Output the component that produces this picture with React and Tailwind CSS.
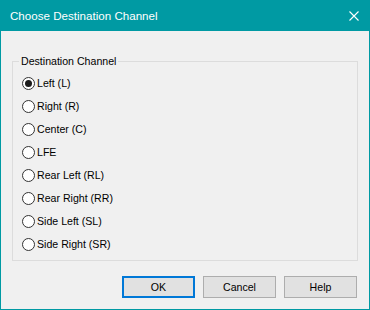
import React from "react";

const options = [
  "Left (L)",
  "Right (R)",
  "Center (C)",
  "LFE",
  "Rear Left (RL)",
  "Rear Right (RR)",
  "Side Left (SL)",
  "Side Right (SR)",
];

function Radio({ checked }) {
  return (
    <span className="w-[13px] h-[13px] rounded-full border border-[#333333] bg-white flex items-center justify-center shrink-0">
      {checked && <span className="w-[7px] h-[7px] rounded-full bg-[#1a1a1a]" />}
    </span>
  );
}

export default function App() {
  return (
    <div
      className="w-[370px] h-[310px] flex flex-col bg-[#009aa3] text-[10.6px] text-black"
      style={{ fontFamily: '"Liberation Sans", Arial, sans-serif' }}
    >
      <div className="h-[31px] flex items-center justify-between pl-[10px] pr-[11px] text-white shrink-0 text-[11.6px]">
        <span className="leading-none">Choose Destination Channel</span>
        <svg width="10" height="10" viewBox="0 0 10 10" className="block">
          <path d="M0.5 0.5 L9.5 9.5 M9.5 0.5 L0.5 9.5" stroke="white" strokeWidth="1.1" />
        </svg>
      </div>
      <div className="flex-1 mx-[1px] mb-[1px] bg-[#f0f0f0] flex flex-col pl-[11px] pr-[11px] pt-[22px]">
        <fieldset className="border border-[#dcdcdc] h-[208px] p-0 m-0 min-w-0">
          <legend className="ml-[6px] px-[2px] leading-[16px]">Destination Channel</legend>
          <div className="flex flex-col pl-[9px] pt-[3px]">
            {options.map((o, i) => (
              <label key={o} className="h-[23px] flex items-center gap-[2px]">
                <Radio checked={i === 0} />
                <span className="leading-none">{o}</span>
              </label>
            ))}
          </div>
        </fieldset>
        <div className="flex justify-end gap-[8px] mt-[15px] pr-[1px]">
          <button className="w-[73px] h-[22px] border-2 border-[#0078d7] bg-[#e1e1e1] leading-none">OK</button>
          <button className="w-[73px] h-[22px] border border-[#adadad] bg-[#e1e1e1] leading-none">Cancel</button>
          <button className="w-[73px] h-[22px] border border-[#adadad] bg-[#e1e1e1] leading-none">Help</button>
        </div>
      </div>
    </div>
  );
}
